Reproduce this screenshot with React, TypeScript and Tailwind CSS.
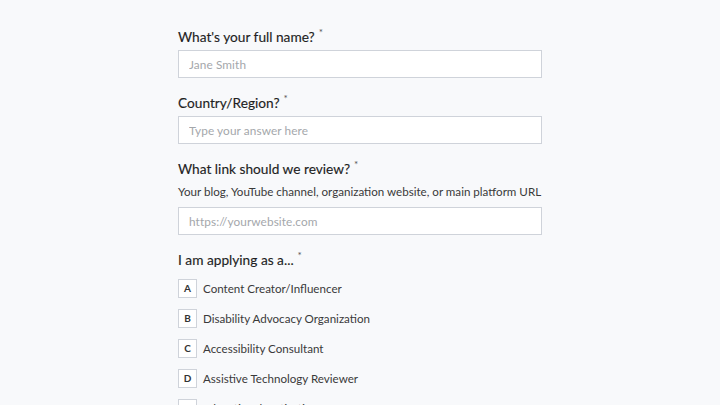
import React from "react";

const options = [
  { key: "A", label: "Content Creator/Influencer" },
  { key: "B", label: "Disability Advocacy Organization" },
  { key: "C", label: "Accessibility Consultant" },
  { key: "D", label: "Assistive Technology Reviewer" },
  { key: "E", label: "Educational Institution" },
];

const Label = ({ children }: { children: React.ReactNode }) => (
  <div className="h-[20px] text-[13.7px] leading-[20px] text-[#1f1f1f] whitespace-nowrap [-webkit-text-stroke:0.15px_#1f1f1f]">
    {children}
    <span className="inline-block ml-[4px] text-[10px] leading-none text-[#555] -translate-y-[6px] [-webkit-text-stroke:0px_transparent]">*</span>
  </div>
);

const TextInput = ({ placeholder }: { placeholder: string }) => (
  <input
    type="text"
    placeholder={placeholder}
    className="block w-full h-[28px] bg-white border border-[#cfd3da] px-[10px] text-[11.8px] tracking-[0.1px] text-[#333] placeholder:text-[#a4a7ab] outline-none"
  />
);

export default function App() {
  return (
    <div
      className="w-[720px] h-[405px] overflow-hidden bg-[#f8f9fb]"
      style={{ fontFamily: "Lato, 'Open Sans', sans-serif" }}
    >
      <div className="w-[364px] ml-[178px] pt-[27px]">
        <Label>What's your full name?</Label>
        <div className="mt-[3px]">
          <TextInput placeholder="Jane Smith" />
        </div>

        <div className="mt-[15px]">
          <Label>Country/Region?</Label>
        </div>
        <div className="mt-[3px]">
          <TextInput placeholder="Type your answer here" />
        </div>

        <div className="mt-[15px]">
          <Label>What link should we review?</Label>
        </div>
        <p className="mt-[4px] h-[18px] text-[11.6px] leading-[18px] text-[#3a3a3a] whitespace-nowrap">
          Your blog, YouTube channel, organization website, or main platform URL
        </p>
        <div className="mt-[6px]">
          <TextInput placeholder="https://yourwebsite.com" />
        </div>

        <div className="mt-[15px]">
          <Label>I am applying as a...</Label>
        </div>
        <div className="mt-[9px] flex flex-col gap-[11px]">
          {options.map((o) => (
            <div key={o.key} className="flex items-center gap-[6px]">
              <span className="w-[19px] h-[19px] shrink-0 bg-white border border-[#cfd3da] flex items-center justify-center text-[10px] font-bold text-[#333]">
                {o.key}
              </span>
              <span className="text-[11.6px] leading-[19px] text-[#3a3a3a]">{o.label}</span>
            </div>
          ))}
        </div>
      </div>
    </div>
  );
}
